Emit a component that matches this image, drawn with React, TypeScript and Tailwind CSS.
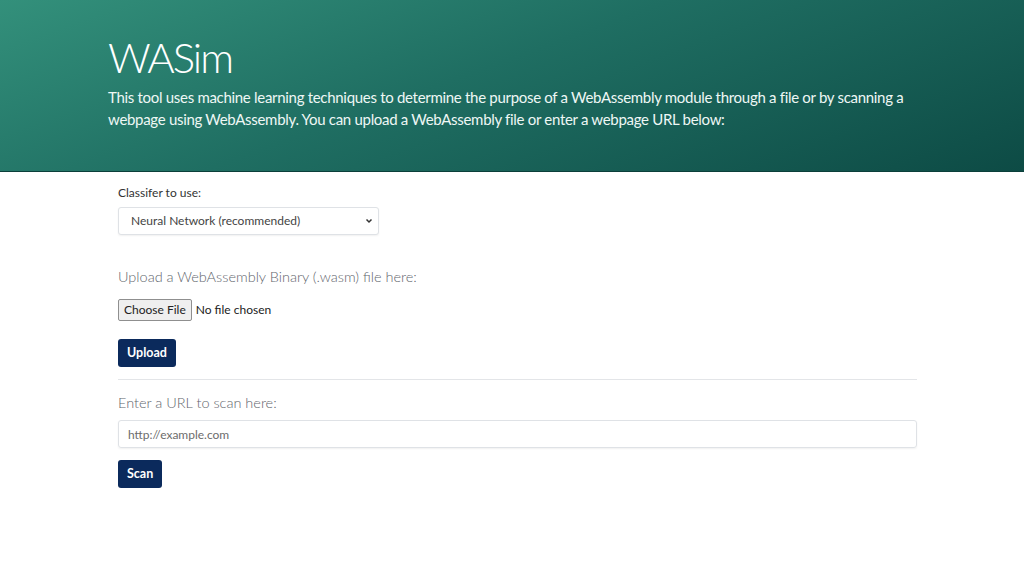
export default function App() {
  return (
    <div className="min-h-[576px] bg-white font-['Lato','Noto_Sans',sans-serif] text-[#212529]">
      <header className="h-[172px] border-b border-[#0b3f3a] bg-[linear-gradient(160deg,#33907b_0%,#1f6e62_45%,#0d4b45_100%)] pl-[108px] pr-[100px] pt-[32px] text-white">
        <h1 className="text-[42px] font-light leading-[50px] tracking-[-2px]">WASim</h1>
        <p className="mt-[4px] max-w-[800px] text-[15px] leading-[22px] tracking-[-0.3px] text-[#eef7f5]">
          This tool uses machine learning techniques to determine the purpose of a WebAssembly module through a file or by scanning a webpage using WebAssembly. You can upload a WebAssembly file or enter a webpage URL below:
        </p>
      </header>

      <main className="mx-[118px] w-[799px] pt-[12px]">
        <label className="block text-[12px] leading-[18px] text-[#333]">Classifer to use:</label>
        <div className="relative mt-[5px] w-[261px]">
          <select className="h-[28px] w-full appearance-none rounded-[3px] border border-[#dfe2e6] bg-white pl-[12px] text-[12px] text-[#444] shadow-[0_1px_2px_rgba(0,0,0,0.06)]">
            <option>Neural Network (recommended)</option>
          </select>
          <svg className="pointer-events-none absolute right-[6px] top-[10px] h-[8px] w-[8px]" viewBox="0 0 8 8">
            <path d="M1.5 2.5 L4 5 L6.5 2.5" fill="none" stroke="#333" strokeWidth="1.5" />
          </svg>
        </div>

        <h2 className="mt-[32px] text-[14.5px] font-light leading-[20px] text-[#5f666d]">
          Upload a WebAssembly Binary (.wasm) file here:
        </h2>
        <div className="mt-[12px] flex items-center text-[12px]">
          <span className="rounded-[2px] border border-[#8f8f8f] bg-[#efefef] px-[5px] py-[2px] leading-[16px] text-[#222]">Choose File</span>
          <span className="ml-[4px] text-[#222]">No file chosen</span>
        </div>
        <button className="mt-[18px] h-[28px] rounded-[3px] bg-[#0b2a5c] px-[9px] text-[12.5px] font-bold text-white">
          Upload
        </button>

        <hr className="mt-[12px] border-[#e3e5e8]" />

        <h2 className="mt-[13px] text-[14.5px] font-light leading-[20px] text-[#5f666d]">
          Enter a URL to scan here:
        </h2>
        <input
          className="mt-[7px] h-[28px] w-full rounded-[3px] border border-[#dfe2e6] pl-[9px] text-[12px] text-[#444] shadow-[0_1px_2px_rgba(0,0,0,0.06)] placeholder:text-[#6c6c6c]"
          placeholder="http://example.com"
        />
        <button className="mt-[12px] h-[28px] rounded-[3px] bg-[#0b2a5c] px-[9px] text-[12.5px] font-bold text-white">
          Scan
        </button>
      </main>
    </div>
  );
}
